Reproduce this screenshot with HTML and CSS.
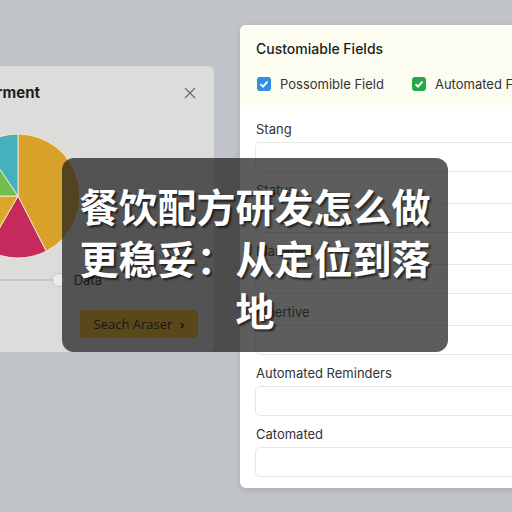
FILE: index.html
```html
<!DOCTYPE html>
<html lang="zh-CN">
  <head>
    <meta charset="UTF-8" />
    <meta name="viewport" content="width=device-width, initial-scale=1.0" />
    <title>餐饮配方研发</title>
    <link rel="stylesheet" href="styles.css">
  </head>
  <body>
    <div class="desk">
      <!-- Chart window -->
      <div class="card chart-card">
        <div class="chart-head">
          <h2>Deferment</h2>
          <svg class="close" width="12" height="12" viewBox="0 0 12 12">
            <path d="M1 1 L11 11 M11 1 L1 11" stroke="#6a6a6a" stroke-width="1.2" fill="none" />
          </svg>
        </div>

        <svg class="pie" width="130" height="130" viewBox="0 0 130 130">
          <g stroke="#f1e7cf" stroke-width="1">
            <path d="M65 65 L65 3 A62 62 0 0 1 93.2 120.2 Z" fill="#d8a22a" />
            <path d="M65 65 L93.2 120.2 A62 62 0 0 1 34 118.7 Z" fill="#c42a5c" />
            <path d="M65 65 L34 118.7 A62 62 0 0 1 3 65 Z" fill="#dca82c" />
            <path d="M65 65 L3 65 A62 62 0 0 1 30.3 13.6 Z" fill="#72bd50" />
            <path d="M65 65 L30.3 13.6 A62 62 0 0 1 65 3 Z" fill="#45b1be" />
          </g>
        </svg>

        <div class="slider">
          <div class="track"></div>
          <div class="handle"></div>
          <span>Data</span>
        </div>

        <button class="search-btn">Seach Araser <span class="chev">›</span></button>
      </div>

      <!-- Fields window -->
      <div class="card fields-card">
        <div class="fields-head">
          <h2>Customiable Fields</h2>
          <div class="checks">
            <label class="check">
              <svg width="14" height="14" viewBox="0 0 14 14">
                <rect width="14" height="14" rx="3" fill="#2e8fe3" />
                <path d="M3.5 7.2 L6 9.6 L10.5 4.6" stroke="#fff" stroke-width="1.8" fill="none" />
              </svg>
              Possomible Field
            </label>
            <label class="check">
              <svg width="14" height="14" viewBox="0 0 14 14">
                <rect width="14" height="14" rx="3" fill="#27a84b" />
                <path d="M3.5 7.2 L6 9.6 L10.5 4.6" stroke="#fff" stroke-width="1.8" fill="none" />
              </svg>
              Automated Fields
            </label>
          </div>
        </div>

        <div class="fields">
          <div class="field"><label>Stang</label><div class="input"></div></div>
          <div class="field"><label>Status</label><div class="input"></div></div>
          <div class="field"><label>Manager</label><div class="input"></div></div>
          <div class="field"><label>Inhertive</label><div class="input"></div></div>
          <div class="field"><label>Automated Reminders</label><div class="input"></div></div>
          <div class="field"><label>Catomated</label><div class="input"></div></div>
        </div>
      </div>
    </div>

    <!-- Title banner -->
    <div class="banner">
      <h1>餐饮配方研发怎么做更稳妥：从定位到落地</h1>
    </div>
  </body>
</html>
```

FILE: styles.css
```css
body {
  margin: 0;
  height: 512px;
  overflow: hidden;
  background: #c0c3c7;
  font-family: Inter, "Noto Sans", sans-serif;
  color: #2a2a2a;
}
.desk {
  display: flex;
  align-items: flex-start;
}
.card {
  flex-shrink: 0;
  box-sizing: border-box;
  border-radius: 6px;
}

/* chart window */
.chart-card {
  width: 274px;
  margin-left: -60px;
  margin-top: 66px;
  padding: 16px 16px 14px 16px;
  background: #dcdcdb;
  display: flex;
  flex-direction: column;
}
.chart-head {
  display: flex;
  justify-content: space-between;
  align-items: center;
  height: 22px;
}
.chart-head h2 {
  margin: 0;
  margin-left: 6px;
  font-size: 15px;
  font-weight: 700;
  line-height: 22px;
  color: #1e1e1e;
}
.close {
  margin-right: 2px;
}
.pie {
  margin-top: 27px;
  margin-left: -3px;
}
.slider {
  display: flex;
  align-items: center;
  height: 16px;
  margin-top: 11px;
  padding-right: 96px;
}
.track {
  flex: 1;
  height: 2px;
  background: #c6c6c6;
}
.handle {
  width: 12px;
  height: 12px;
  border-radius: 50%;
  border: 1.5px solid #c4c4c4;
  background: #ececec;
  margin-right: 8px;
}
.slider span {
  font-size: 13px;
  color: #111;
}
.search-btn {
  align-self: flex-end;
  margin-top: 22px;
  width: 118px;
  height: 28px;
  border: none;
  border-radius: 3px;
  background: #f5b414;
  color: #000;
  font-family: "Open Sans", sans-serif;
  font-size: 13px;
  padding: 0;
}
.chev {
  margin-left: 4px;
  font-weight: 700;
}

/* fields window */
.fields-card {
  width: 300px;
  margin-left: 26px;
  margin-top: 25px;
  background: #fff;
  overflow: hidden;
  box-shadow: 0 2px 6px rgba(0, 0, 0, 0.12);
}
.fields-head {
  background: #fcfcf1;
  padding: 14px 16px 12px 16px;
}
.fields-head h2 {
  margin: 0;
  font-size: 14px;
  font-weight: 500;
  line-height: 20px;
  color: #1c1c1c;
}
.checks {
  display: flex;
  gap: 27px;
  margin-top: 16px;
  white-space: nowrap;
}
.check {
  display: flex;
  align-items: center;
  gap: 9px;
  font-size: 13px;
  line-height: 18px;
  color: #333;
}
.check svg {
  margin-left: 1px;
}
.fields {
  padding: 16px 0 11px 15px;
  display: flex;
  flex-direction: column;
  gap: 10px;
}
.field label {
  display: block;
  font-size: 13px;
  line-height: 17px;
  padding-left: 1px;
  color: #333;
}
.input {
  margin-top: 4px;
  height: 30px;
  box-sizing: border-box;
  border: 1px solid #e7e7e7;
  border-radius: 5px;
}

/* title banner laid over the windows */
.banner {
  position: absolute;
  left: 62px;
  top: 158px;
  width: 386px;
  height: 194px;
  box-sizing: border-box;
  padding: 21px 16px 0 16px;
  border-radius: 12px;
  background: rgba(30, 30, 30, 0.72);
}
.banner h1 {
  margin: 0;
  text-align: center;
  font-family: "Noto Sans CJK SC", sans-serif;
  font-size: 39px;
  font-weight: 700;
  line-height: 52px;
  color: #fff;
  text-shadow: 2px 2px 2px rgba(0, 0, 0, 0.6);
}
```
